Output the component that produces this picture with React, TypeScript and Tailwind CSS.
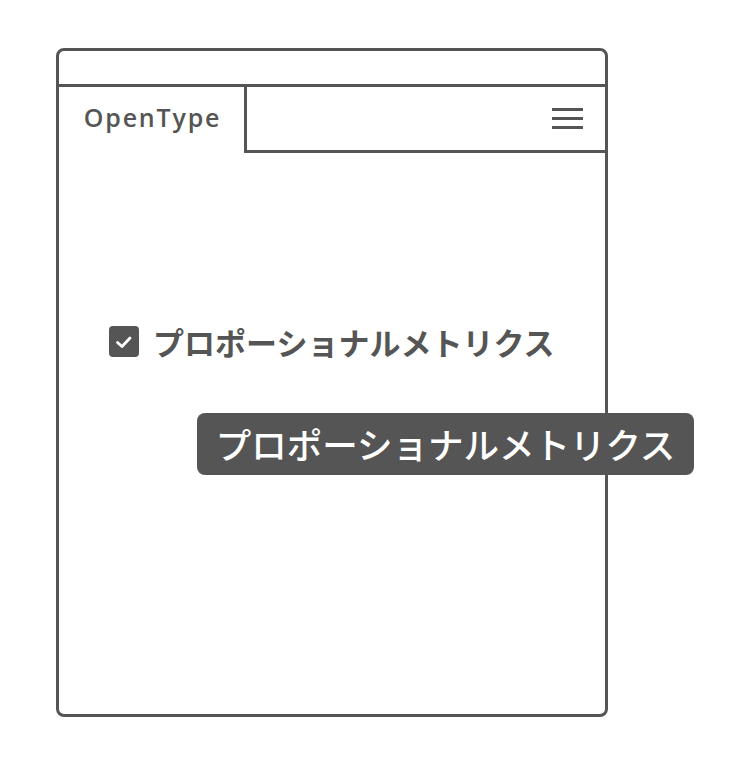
import React from "react";

export default function App() {
  return (
    <div className="w-[750px] h-[766px] bg-white pt-[48px] pl-[56px]">
      <div className="relative w-[552px] h-[669px] border-[3px] border-[#555555] rounded-[8px] flex flex-col">
        <div className="h-[36px] border-b-[3px] border-[#555555] shrink-0" />
        <div className="flex h-[66px] shrink-0">
          <div className="w-[188px] h-full border-r-[3px] border-[#555555] flex items-center justify-center pb-[4px]">
            <span
              className="text-[25px] font-semibold text-[#555555] tracking-[1.8px] pl-[2px]"
              style={{ fontFamily: '"Open Sans", "Noto Sans", sans-serif' }}
            >
              OpenType
            </span>
          </div>
          <div className="flex-1 h-full border-b-[3px] border-[#555555] flex items-center justify-end pr-[22px]">
            <div className="flex flex-col gap-[6px] w-[31px]">
              <div className="h-[3px] bg-[#555555]" />
              <div className="h-[3px] bg-[#555555]" />
              <div className="h-[3px] bg-[#555555]" />
            </div>
          </div>
        </div>
        <div className="flex items-center pl-[50px] mt-[173px] gap-[14px]">
          <div className="w-[30px] h-[31px] rounded-[4px] bg-[#555555] flex items-center justify-center shrink-0">
            <svg width="20" height="20" viewBox="0 0 20 20" fill="none">
              <path d="M3.5 10.5 L8 14.5 L16 6" stroke="white" strokeWidth="2.8" strokeLinecap="round" strokeLinejoin="round" />
            </svg>
          </div>
          <span
            className="text-[31px] font-bold text-[#555555] leading-none whitespace-nowrap"
            style={{ fontFamily: '"Noto Sans CJK JP", sans-serif' }}
          >
            プロポーショナルメトリクス
          </span>
        </div>
        <div className="absolute left-[138px] top-[362px] w-[497px] h-[62px] rounded-[8px] bg-[#555555] flex items-center justify-center">
          <span
            className="text-[35.5px] font-medium text-white leading-none whitespace-nowrap"
            style={{ fontFamily: '"Noto Sans CJK JP", sans-serif' }}
          >
            プロポーショナルメトリクス
          </span>
        </div>
      </div>
    </div>
  );
}
